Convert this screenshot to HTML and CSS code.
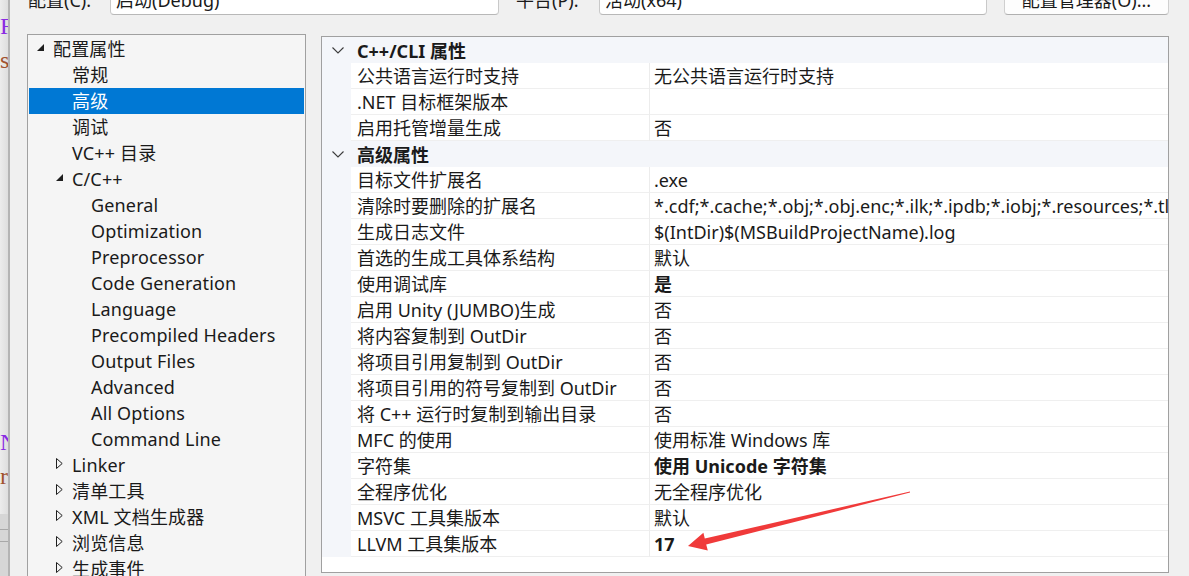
FILE: index.html
```html
<!DOCTYPE html>
<html lang="zh-CN">
<head>
<meta charset="utf-8">
<title>属性页</title>
<link rel="stylesheet" href="styles.css">
</head>
<body>
<div class="page">
  <div class="editor">
    <div class="ed-line ed-r">R</div>
    <div class="ed-line ed-s">s</div>
    <div class="ed-line ed-n">N</div>
    <div class="ed-line ed-rr">r</div>
    <div class="ed-bottom">
      <div class="ed-rule"></div>
      <div class="ed-rule"></div>
    </div>
  </div>
  <div class="dialog">
    <div class="topbar">
      <span class="label label-config">配置(C):</span>
      <div class="combo combo-config"><span>启动(Debug)</span><svg class="drop" width="8" height="5" viewBox="0 0 8 5"><polyline points="0.5,0.5 4,4 7.5,0.5" fill="none" stroke="#555" stroke-width="1"/></svg></div>
      <span class="label label-platform">平台(P):</span>
      <div class="combo combo-platform"><span>活动(x64)</span><svg class="drop" width="8" height="5" viewBox="0 0 8 5"><polyline points="0.5,0.5 4,4 7.5,0.5" fill="none" stroke="#555" stroke-width="1"/></svg></div>
      <div class="button">配置管理器(O)...</div>
    </div>
    <div class="main">
      <div class="tree">
        <div class="node l0"><span class="tog"><svg width="7" height="7" viewBox="0 0 7 7"><polygon points="7,0 7,7 0,7" fill="#1e1e1e"/></svg></span><span>配置属性</span></div>
        <div class="node l1"><span class="tog"></span><span>常规</span></div>
        <div class="node l1 sel"><span class="tog"></span><span>高级</span></div>
        <div class="node l1"><span class="tog"></span><span>调试</span></div>
        <div class="node l1"><span class="tog"></span><span>VC++ 目录</span></div>
        <div class="node l1"><span class="tog"><svg width="7" height="7" viewBox="0 0 7 7"><polygon points="7,0 7,7 0,7" fill="#1e1e1e"/></svg></span><span>C/C++</span></div>
        <div class="node l2"><span class="tog"></span><span>General</span></div>
        <div class="node l2"><span class="tog"></span><span>Optimization</span></div>
        <div class="node l2"><span class="tog"></span><span>Preprocessor</span></div>
        <div class="node l2"><span class="tog"></span><span>Code Generation</span></div>
        <div class="node l2"><span class="tog"></span><span>Language</span></div>
        <div class="node l2"><span class="tog"></span><span>Precompiled Headers</span></div>
        <div class="node l2"><span class="tog"></span><span>Output Files</span></div>
        <div class="node l2"><span class="tog"></span><span>Advanced</span></div>
        <div class="node l2"><span class="tog"></span><span>All Options</span></div>
        <div class="node l2"><span class="tog"></span><span>Command Line</span></div>
        <div class="node l1"><span class="tog"><svg width="7" height="11" viewBox="0 0 7 11"><polygon points="0.5,0.5 6.2,5.5 0.5,10.5" fill="none" stroke="#1e1e1e" stroke-width="1"/></svg></span><span>Linker</span></div>
        <div class="node l1"><span class="tog"><svg width="7" height="11" viewBox="0 0 7 11"><polygon points="0.5,0.5 6.2,5.5 0.5,10.5" fill="none" stroke="#1e1e1e" stroke-width="1"/></svg></span><span>清单工具</span></div>
        <div class="node l1"><span class="tog"><svg width="7" height="11" viewBox="0 0 7 11"><polygon points="0.5,0.5 6.2,5.5 0.5,10.5" fill="none" stroke="#1e1e1e" stroke-width="1"/></svg></span><span>XML 文档生成器</span></div>
        <div class="node l1"><span class="tog"><svg width="7" height="11" viewBox="0 0 7 11"><polygon points="0.5,0.5 6.2,5.5 0.5,10.5" fill="none" stroke="#1e1e1e" stroke-width="1"/></svg></span><span>浏览信息</span></div>
        <div class="node l1"><span class="tog"><svg width="7" height="11" viewBox="0 0 7 11"><polygon points="0.5,0.5 6.2,5.5 0.5,10.5" fill="none" stroke="#1e1e1e" stroke-width="1"/></svg></span><span>生成事件</span></div>
      </div>
      <div class="grid">
        <div class="cat"><span class="gut"><svg width="12" height="7" viewBox="0 0 12 7"><polyline points="0.5,0.5 6,6 11.5,0.5" fill="none" stroke="#3c3c3c" stroke-width="1.1"/></svg></span><span class="cat-name">C++/CLI 属性</span></div>
        <div class="row"><span class="gut"></span><span class="name">公共语言运行时支持</span><span class="val">无公共语言运行时支持</span></div>
        <div class="row"><span class="gut"></span><span class="name">.NET 目标框架版本</span><span class="val"></span></div>
        <div class="row"><span class="gut"></span><span class="name">启用托管增量生成</span><span class="val">否</span></div>
        <div class="cat"><span class="gut"><svg width="12" height="7" viewBox="0 0 12 7"><polyline points="0.5,0.5 6,6 11.5,0.5" fill="none" stroke="#3c3c3c" stroke-width="1.1"/></svg></span><span class="cat-name">高级属性</span></div>
        <div class="row"><span class="gut"></span><span class="name">目标文件扩展名</span><span class="val">.exe</span></div>
        <div class="row"><span class="gut"></span><span class="name">清除时要删除的扩展名</span><span class="val">*.cdf;*.cache;*.obj;*.obj.enc;*.ilk;*.ipdb;*.iobj;*.resources;*.tlb;*.tli;*.tlh;*.tmp;*.rsp;*.pgc;*.pgd;*.meta;*.tlog;*.manifest;*.res;*.pch;*.exp;*.idb;*.rep;*.xdc;*.pdb;*_manifest.rc;*.bsc;*.sbr;*.xml;*.metagen;*.bi</span></div>
        <div class="row"><span class="gut"></span><span class="name">生成日志文件</span><span class="val">$(IntDir)$(MSBuildProjectName).log</span></div>
        <div class="row"><span class="gut"></span><span class="name">首选的生成工具体系结构</span><span class="val">默认</span></div>
        <div class="row"><span class="gut"></span><span class="name">使用调试库</span><span class="val bold">是</span></div>
        <div class="row"><span class="gut"></span><span class="name">启用 Unity (JUMBO)生成</span><span class="val">否</span></div>
        <div class="row"><span class="gut"></span><span class="name">将内容复制到 OutDir</span><span class="val">否</span></div>
        <div class="row"><span class="gut"></span><span class="name">将项目引用复制到 OutDir</span><span class="val">否</span></div>
        <div class="row"><span class="gut"></span><span class="name">将项目引用的符号复制到 OutDir</span><span class="val">否</span></div>
        <div class="row"><span class="gut"></span><span class="name">将 C++ 运行时复制到输出目录</span><span class="val">否</span></div>
        <div class="row"><span class="gut"></span><span class="name">MFC 的使用</span><span class="val">使用标准 Windows 库</span></div>
        <div class="row"><span class="gut"></span><span class="name">字符集</span><span class="val bold">使用 Unicode 字符集</span></div>
        <div class="row"><span class="gut"></span><span class="name">全程序优化</span><span class="val">无全程序优化</span></div>
        <div class="row"><span class="gut"></span><span class="name">MSVC 工具集版本</span><span class="val">默认</span></div>
        <div class="row"><span class="gut"></span><span class="name">LLVM 工具集版本</span><span class="val bold">17</span></div>
      </div>
    </div>
  </div>
  <svg class="annot" width="1189" height="576" viewBox="0 0 1189 576">
    <polygon points="688,546 703.4,532.8 704.8,538.6 910,491.4 910,492.6 706.2,544.6 707.8,550.6" fill="#f03a3a"/>
  </svg>
</div>
</body>
</html>
```

FILE: styles.css
```css
html, body {
  margin: 0;
  padding: 0;
}
body {
  width: 1189px;
  height: 576px;
  overflow: hidden;
  background: #f0f0f0;
  font-family: "Noto Sans", "Noto Sans CJK SC", sans-serif;
  font-size: 18px;
  color: #1a1a1a;
}
.page {
  position: relative;
  display: flex;
  width: 1189px;
  height: 576px;
  overflow: hidden;
}

/* editor strip on the far left */
.editor {
  width: 8px;
  flex: none;
  background: linear-gradient(to right, #ececec, #dedede);
  border-right: 2px solid #b4b4b4;
  overflow: hidden;
  font-family: "Liberation Serif", serif;
  font-size: 24px;
  line-height: 24px;
  display: flex;
  flex-direction: column;
}
.ed-line {
  height: 24px;
  white-space: nowrap;
}
.ed-r { margin-top: 14px; color: #8a2be2; }
.ed-s { margin-top: 10px; color: #a0522d; }
.ed-n { margin-top: 358px; color: #8a2be2; }
.ed-rr { margin-top: 10px; color: #a0522d; }
.ed-bottom {
  margin-top: 26px;
  flex: 1;
  background: #d6d6d6;
  padding-top: 15px;
}
.ed-rule {
  height: 1px;
  background: #a8a8a8;
  margin-bottom: 11px;
}

/* dialog */
.dialog {
  flex: 1;
  display: flex;
  flex-direction: column;
  min-width: 0;
}
.topbar {
  display: flex;
  align-items: flex-end;
  height: 40px;
  margin-top: -25px;
  flex: none;
}
.label {
  line-height: 26px;
  padding-bottom: 2px;
  white-space: nowrap;
}
.label-config { margin-left: 18px; width: 82px; }
.label-platform { margin-left: 17px; width: 83px; }
.combo {
  box-sizing: border-box;
  height: 40px;
  background: #ffffff;
  border: 1px solid #c9c9c9;
  border-bottom-color: #b8b8b8;
  border-radius: 0 0 4px 4px;
  display: flex;
  align-items: flex-end;
  justify-content: space-between;
  padding: 0 10px 1px 5px;
  line-height: 26px;
}
.combo-config { width: 389px; }
.combo-platform { width: 388px; }
.drop {
  align-self: flex-end;
  margin-bottom: 22px;
}
.button {
  box-sizing: border-box;
  margin-left: 17px;
  width: 165px;
  height: 40px;
  background: #fdfdfd;
  border: 1px solid #cfcfcf;
  border-bottom-color: #b0b0b0;
  border-radius: 0 0 4px 4px;
  display: flex;
  align-items: flex-end;
  justify-content: center;
  line-height: 26px;
  padding-bottom: 1px;
  white-space: nowrap;
}

.main {
  display: flex;
  align-items: flex-start;
  margin-top: 19px;
  padding-left: 17px;
  gap: 15px;
}

/* tree */
.tree {
  box-sizing: border-box;
  width: 279px;
  height: 560px;
  flex: none;
  background: #f5f5f5;
  border: 1px solid #a0a0a0;
  padding: 1px;
  overflow: hidden;
}
.node {
  display: flex;
  align-items: center;
  height: 26px;
  line-height: 26px;
  white-space: nowrap;
  color: #1a1a1a;
  letter-spacing: 0.15px;
}
.node.l0 { padding-left: 8px; }
.node.l1 { padding-left: 27px; }
.node.l2 { padding-left: 46px; }
.node.sel {
  background: #0078d4;
  color: #ffffff;
}
.tog {
  width: 16px;
  flex: none;
  display: flex;
  align-items: center;
  height: 26px;
}
.tog svg { margin-top: -4px; }

/* property grid */
.grid {
  box-sizing: border-box;
  margin-top: 2px;
  width: 848px;
  height: 537px;
  flex: none;
  background: #ffffff;
  border: 1px solid #a0a0a0;
  overflow: hidden;
}
.cat, .row {
  display: grid;
  grid-template-columns: 29px 299px 1fr;
  height: 26px;
  white-space: nowrap;
}
.cat {
  background: #f4f6fa;
}
.gut {
  background: #f4f6fa;
  display: flex;
  align-items: center;
  padding-left: 10px;
}
.gut svg { margin-top: 0; }
.cat-name {
  grid-column: 2 / 4;
  font-weight: 700;
  padding: 2px 0 0 6px;
  line-height: 24px;
}
.name {
  box-sizing: border-box;
  padding: 2px 0 0 6px;
  border-right: 1px solid #ececec;
  border-bottom: 1px solid #efefef;
  overflow: hidden;
  line-height: 23px;
}
.val {
  box-sizing: border-box;
  padding: 2px 0 0 4px;
  border-bottom: 1px solid #efefef;
  overflow: hidden;
  line-height: 23px;
}
.bold { font-weight: 700; }

.annot {
  position: absolute;
  left: 0;
  top: 0;
  pointer-events: none;
}
```
